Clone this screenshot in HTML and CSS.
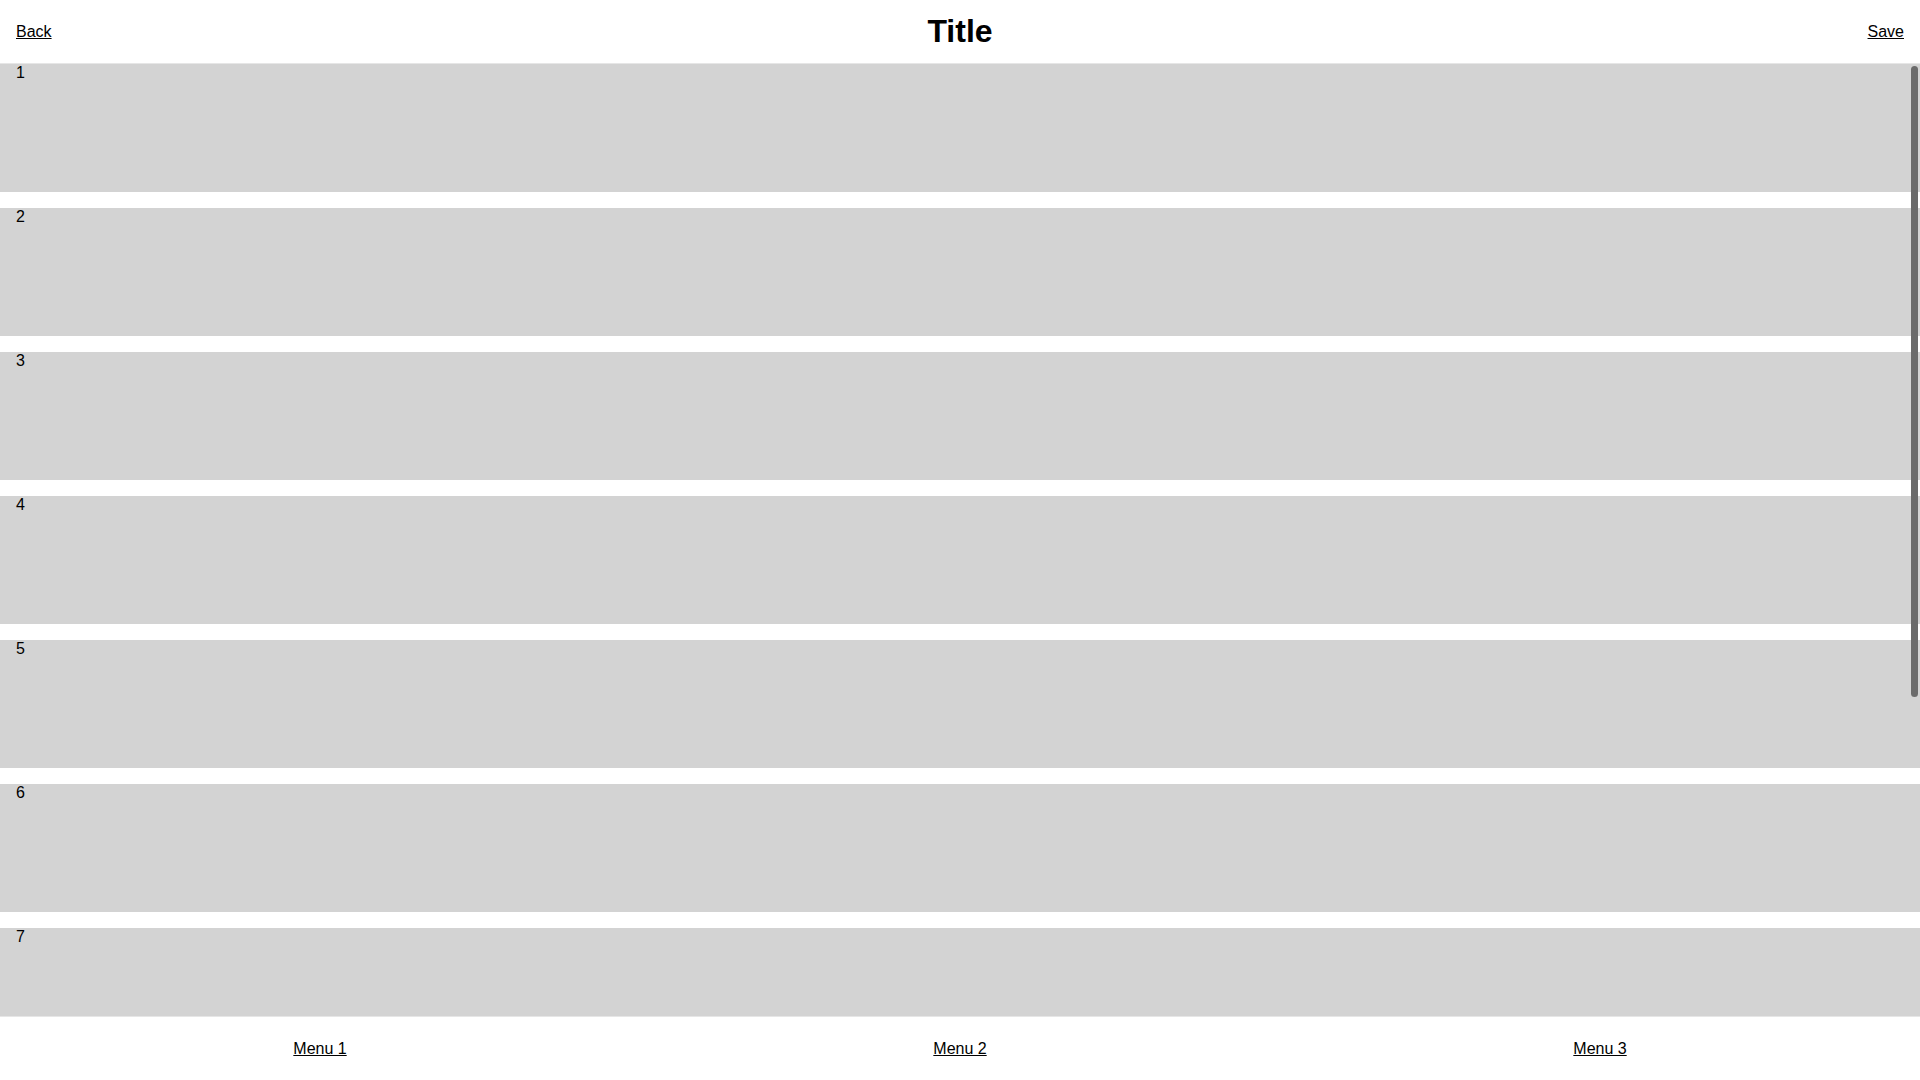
FILE: index.html
```html
<!DOCTYPE html>
<html lang="en">
<head>
    <meta charset="UTF-8" />
    <meta name="viewport" content="width=device-width, initial-scale=1.0"/>
    <title>Title</title>
    <link rel="stylesheet" href="styles.css">
</head>
<body>
<header class="top-bar">
    <a href="#" class="top-left">Back</a>
    <h1 class="title">Title</h1>
    <a href="#" class="top-right">Save</a>
</header>

<main class="content">
    <div class="list">
        <div class="item">1</div>
        <div class="item">2</div>
        <div class="item">3</div>
        <div class="item">4</div>
        <div class="item">5</div>
        <div class="item">6</div>
        <div class="item">7</div>
        <div class="item">8</div>
        <div class="item">9</div>
        <div class="item">10</div>
    </div>
    <div class="scroll-thumb"></div>
</main>

<footer class="bottom-bar">
    <a href="#">Menu 1</a>
    <a href="#">Menu 2</a>
    <a href="#">Menu 3</a>
</footer>
</body>
</html>
```

FILE: styles.css
```css
html, body {
    height: 100%;
}
body {
    margin: 0;
    display: flex;
    flex-direction: column;
    font-family: "Liberation Sans", Arial, sans-serif;
    font-size: 16px;
    color: #000;
    background: #fff;
    overflow: hidden;
}
a {
    color: #000;
    text-decoration: underline;
}
.top-bar {
    box-sizing: border-box;
    height: 64px;
    flex: none;
    display: grid;
    grid-template-columns: 1fr auto 1fr;
    align-items: center;
    padding: 0 16px;
    border-bottom: 1px solid #e6e6e6;
}
.top-right {
    justify-self: end;
}
.title {
    margin: 0;
    font-size: 32px;
    font-weight: bold;
}
.content {
    flex: 1;
    position: relative;
    overflow: hidden;
}
.list {
    display: flex;
    flex-direction: column;
    gap: 16px;
}
.item {
    height: 128px;
    flex: none;
    padding-left: 16px;
    background: #d3d3d3;
}
.scroll-thumb {
    position: absolute;
    top: 2px;
    right: 2px;
    width: 7px;
    height: 631px;
    border-radius: 4px;
    background: #6b6b6b;
}
.bottom-bar {
    box-sizing: border-box;
    height: 64px;
    flex: none;
    display: grid;
    grid-template-columns: repeat(3, 1fr);
    align-items: center;
    justify-items: center;
    border-top: 1px solid #e6e6e6;
}
```
